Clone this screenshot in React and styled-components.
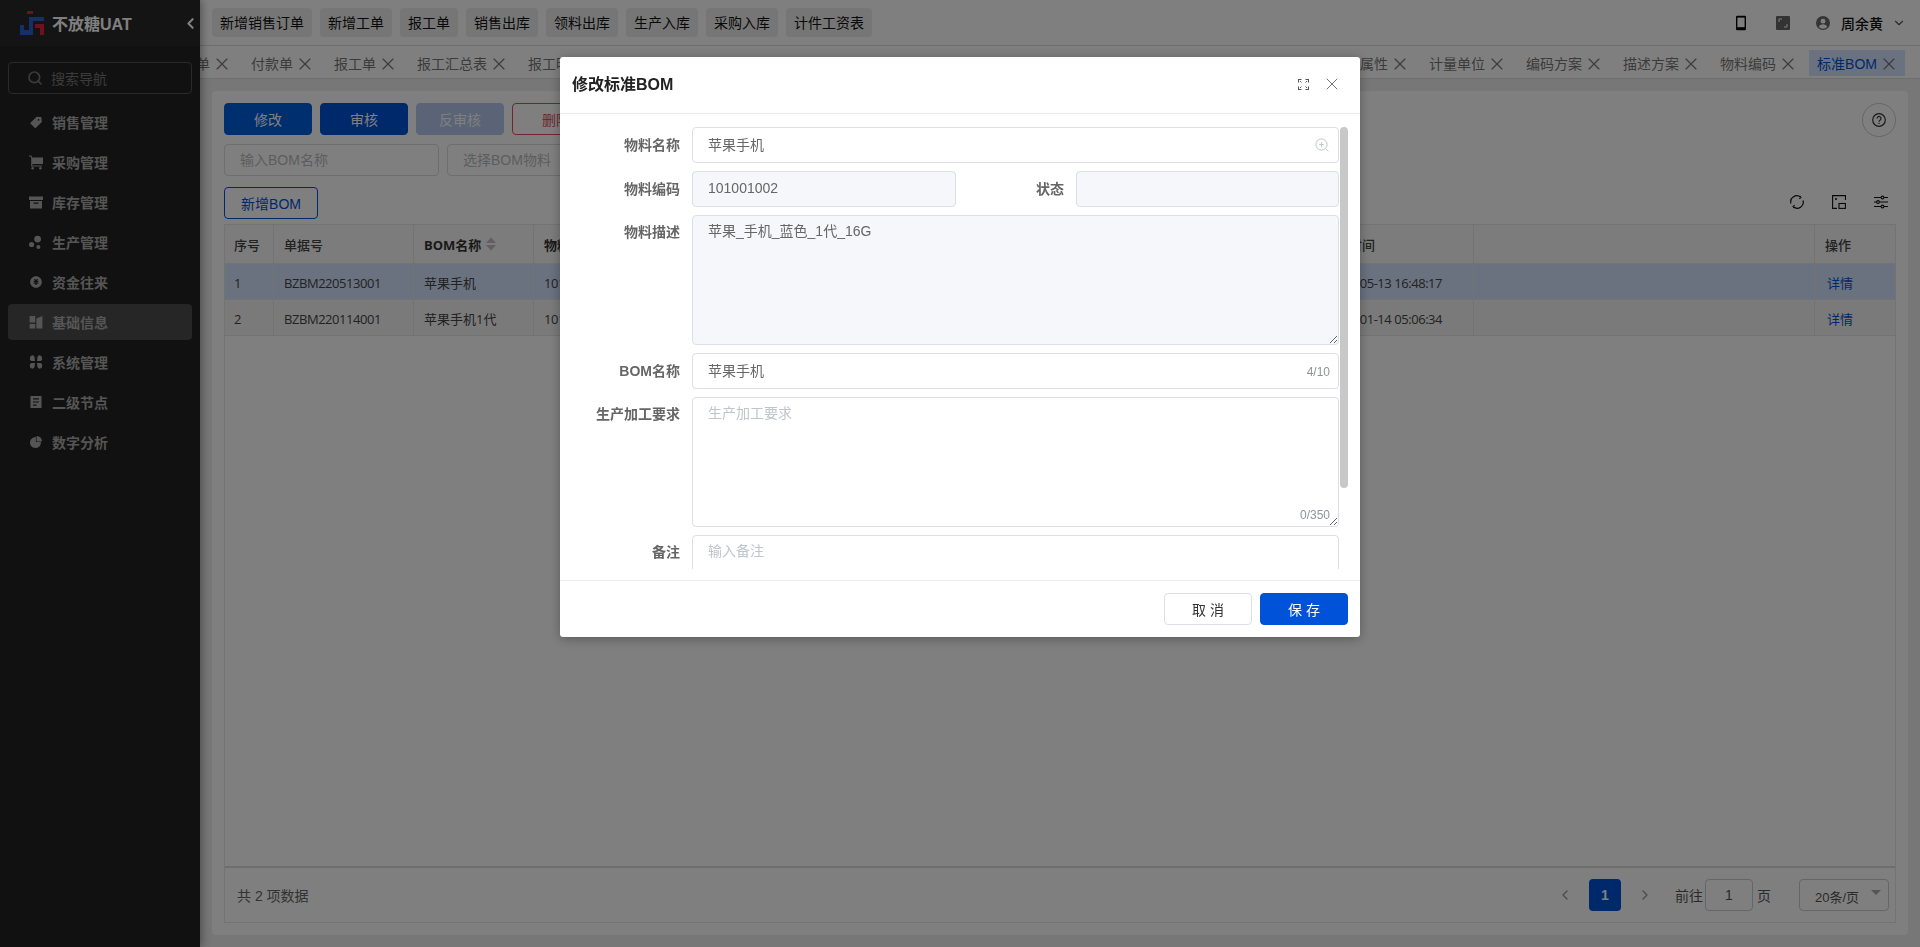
import styled, { createGlobalStyle } from "styled-components";
import { AiFillTag, AiFillPieChart } from "react-icons/ai";
import { FiChevronLeft, FiChevronRight, FiChevronDown, FiSearch, FiX } from "react-icons/fi";
import { RiMoneyCnyCircleFill } from "react-icons/ri";

const FONT = `"Liberation Sans", "Noto Sans CJK SC", sans-serif`;
const TABLE_FONT = `"Open Sans", "Noto Sans CJK SC", sans-serif`;

const GlobalStyle = createGlobalStyle`
  html, body {
    margin: 0;
    height: 100%;
    overflow: hidden;
    font-family: ${FONT};
  }
`;

const Logo = () => (
  <svg width="24" height="24" viewBox="0 0 24 24">
    <path fill="#e0203a" d="M7 0h6v3H7z" />
    <path fill="#2a5ed0" d="M0 14h4v5h5V6h15v4H13v14H0z" />
    <path fill="#e0203a" d="M15 13h9v11h-4v-7h-5z" />
  </svg>
);

const CartIcon = () => (
  <svg width="15" height="15" viewBox="0 0 14 14" fill="currentColor">
    <path d="M0 0h2.6l.5 2H14v6.6H3.3V10H13v1H2.2V2.600L1.700 1H0z" />
    <circle cx="3.600" cy="12.800" r="1.200" />
    <circle cx="11.400" cy="12.800" r="1.200" />
  </svg>
);

const BoxIcon = () => (
  <svg width="15" height="15" viewBox="0 0 14 14" fill="currentColor">
    <path d="M0 1h14v3.400H0zM1 5.400h12V13H1zM4.600 7v1.200h4.800V7z" fillRule="evenodd" />
  </svg>
);

const DotsIcon = () => (
  <svg width="15" height="15" viewBox="0 0 14 14" fill="currentColor">
    <circle cx="8.600" cy="3.600" r="3.400" />
    <circle cx="2.600" cy="9" r="2.600" />
    <circle cx="9.400" cy="11.600" r="2" />
  </svg>
);

const LayoutIcon = () => (
  <svg width="14" height="14" viewBox="0 0 14 14" fill="currentColor">
    <path d="M.6 1h5.600v6.500H.6zM.6 9h5.600v4.400H.6zM7.400 3.600L13.400 1v12.400h-6z" />
  </svg>
);

const AppsIcon = () => (
  <svg width="14" height="14" viewBox="0 0 14 14" fill="currentColor">
    <path d="M1 3a2.200 2.200 0 0 1 4.600-.6L6 6H2.800A2.200 2.200 0 0 1 1 3zM13 3a2.200 2.200 0 0 0-4.600-.6L8 6h3.200A2.200 2.200 0 0 0 13 3zM1 11a2.200 2.200 0 0 0 4.600.6L6 8H2.800A2.200 2.200 0 0 0 1 11zM13 11a2.200 2.200 0 0 1-4.600.6L8 8h3.200A2.200 2.200 0 0 1 13 11z" />
  </svg>
);

const DocIcon = () => (
  <svg width="14" height="14" viewBox="0 0 14 14" fill="currentColor">
    <path
      fillRule="evenodd"
      d="M1.500 1h11v12h-11zM4 3.200v1.200h6V3.200zM4 6.400v1.200h6V6.400zM4 9.600v1.200h3.600V9.600z"
    />
  </svg>
);

const PhoneIcon = () => (
  <svg width="12" height="16" viewBox="0 0 12 16">
    <rect x="1" y="0.800" width="10" height="14.400" rx="1.200" fill="#000" />
    <rect x="2.400" y="2.600" width="7.200" height="9.600" fill="#fff" />
  </svg>
);

const ScreenIcon = () => (
  <svg width="14" height="14" viewBox="0 0 14 14">
    <rect width="14" height="14" rx="1" fill="#666" />
    <path d="M3 6V3h3M11 8v3H8" fill="none" stroke="#fff" strokeWidth="1" />
  </svg>
);

const UserIcon = () => (
  <svg width="14" height="14" viewBox="0 0 14 14">
    <circle cx="7" cy="7" r="7" fill="#6a6a6a" />
    <circle cx="7" cy="5.200" r="2.400" fill="#fff" />
    <path d="M2.800 11c.6-2 2.400-2.800 4.200-2.800s3.600.8 4.200 2.800a6 6 0 0 1-8.400 0z" fill="#fff" />
  </svg>
);

const RefreshIcon = () => (
  <svg width="14" height="14" viewBox="0 0 14 14" fill="none" stroke="#111" strokeWidth="1.200">
    <path d="M1 8.500A6 6 0 0 1 10.600 2.200" />
    <path d="M13 5.500A6 6 0 0 1 3.400 11.800" />
    <path d="M10 .8l1.200 1.900-2 1" strokeWidth="1" />
    <path d="M4 13.200l-1.200-1.900 2-1" strokeWidth="1" />
  </svg>
);

const DensityIcon = () => (
  <svg width="14" height="14" viewBox="0 0 14 14" fill="none" stroke="#111" strokeWidth="1.100">
    <path d="M13.500 5V.6H.6v12.800H5" />
    <rect x="7" y="8.500" width="6.400" height="4.900" />
    <circle cx="4" cy="4" r="1" fill="#111" stroke="none" />
  </svg>
);

const SlidersIcon = () => (
  <svg width="14" height="14" viewBox="0 0 14 14" fill="none" stroke="#111" strokeWidth="1.100">
    <path d="M0 2.500h7M10 2.500h4M0 7h2.500M5.500 7H14M0 11.500h7M10 11.500h4" />
    <circle cx="8.500" cy="2.500" r="1.400" />
    <circle cx="4" cy="7" r="1.400" />
    <circle cx="8.500" cy="11.500" r="1.400" />
  </svg>
);

const ExpandIcon = () => (
  <svg width="11" height="11" viewBox="0 0 11 11" fill="none" stroke="#555" strokeWidth="1.100">
    <path d="M.5 3.500v-3h3M7.500.5h3v3M.5 7.500v3h3M7.500 10.500h3v-3" />
    <path d="M2 2l1.500 1.500M9 2L7.500 3.500M2 9l1.500-1.500M9 9L7.500 7.500" strokeWidth="0.900" />
  </svg>
);

const ZoomPlusIcon = () => (
  <svg width="14" height="14" viewBox="0 0 14 14" fill="none" stroke="#c0c4cc" strokeWidth="1">
    <circle cx="6.500" cy="6.500" r="5.600" />
    <path d="M4.300 6.500h4.400M6.500 4.300v4.400M10.600 10.600l2.700 2.700" />
  </svg>
);

const SortIcon = () => (
  <svg width="10" height="14" viewBox="0 0 10 14" fill="#c0c0c0">
    <path d="M5 .5L10 6H0zM5 13.500L0 8h10z" />
  </svg>
);

const HelpIcon = () => (
  <svg width="14" height="14" viewBox="0 0 14 14" fill="none" stroke="#333" strokeWidth="1.200">
    <circle cx="7" cy="7" r="6.300" />
    <path d="M5 5.400a2 2 0 1 1 3 1.800c-.7.400-1 .8-1 1.500" />
    <path d="M7 9.800v1.200" />
  </svg>
);

const shortcuts = ["新增销售订单", "新增工单", "报工单", "销售出库", "领料出库", "生产入库", "采购入库", "计件工资表"];

const menu = [
  { label: "销售管理", icon: <AiFillTag size={17} /> },
  { label: "采购管理", icon: <CartIcon /> },
  { label: "库存管理", icon: <BoxIcon /> },
  { label: "生产管理", icon: <DotsIcon /> },
  { label: "资金往来", icon: <RiMoneyCnyCircleFill size={18} /> },
  { label: "基础信息", icon: <LayoutIcon />, active: true },
  { label: "系统管理", icon: <AppsIcon /> },
  { label: "二级节点", icon: <DocIcon /> },
  { label: "数字分析", icon: <AiFillPieChart size={18} /> },
];

const tabs = [
  "收款单", "付款单", "报工单", "报工汇总表", "报工明细", "生产订单", "生产领料", "销售订单",
  "采购订单", "委外订单", "供应商管理", "客户信息表", "物料属性", "计量单位", "编码方案",
  "描述方案", "物料编码", "标准BOM",
];

const rows = [
  { no: 1, code: "BZBM220513001", name: "苹果手机", item: "101001002", title: "苹果手机", status: "已审核", time: "2022-05-13 16:48:17", selected: true },
  { no: 2, code: "BZBM220114001", name: "苹果手机1代", item: "101001001", title: "苹果手机", status: "已审核", time: "2022-01-14 05:06:34" },
];

const App = () => {
  return (
    <Page>
      <GlobalStyle />
      <Sidebar>
        <Brand>
          <Logo />
          <BrandName>不放糖UAT</BrandName>
          <Collapse>
            <FiChevronLeft size={17} strokeWidth={3} />
          </Collapse>
        </Brand>
        <NavSearch>
          <FiSearch size={16} strokeWidth={2.5} />
          <span>搜索导航</span>
        </NavSearch>
        <Menu>
          {menu.map((m) => (
            <MenuItem key={m.label} $active={m.active}>
              <MenuIcon>{m.icon}</MenuIcon>
              {m.label}
            </MenuItem>
          ))}
        </Menu>
      </Sidebar>

      <Main>
        <TopBar>
          {shortcuts.map((s) => (
            <Shortcut key={s}>{s}</Shortcut>
          ))}
          <TopRight>
            <TopIcon><PhoneIcon /></TopIcon>
            <TopIcon><ScreenIcon /></TopIcon>
            <UserBox>
              <UserIcon />
              <UserName>周余黄</UserName>
              <FiChevronDown size={14} color="#555" />
            </UserBox>
          </TopRight>
        </TopBar>

        <TabBar>
          {tabs.map((t, i) => (
            <Tab key={t} $active={i === tabs.length - 1}>
              {t}
              <FiX size={20} strokeWidth={1.4} />
            </Tab>
          ))}
        </TabBar>

        <Content>
          <Card>
            <ActionRow>
              <ActionBtn $kind="primary">修改</ActionBtn>
              <ActionBtn $kind="dark">审核</ActionBtn>
              <ActionBtn $kind="disabled">反审核</ActionBtn>
              <ActionBtn $kind="danger">删除</ActionBtn>
              <HelpBtn><HelpIcon /></HelpBtn>
            </ActionRow>
            <FilterRow>
              <FilterInput placeholder="输入BOM名称" />
              <FilterInput placeholder="选择BOM物料" />
            </FilterRow>
            <ToolRow>
              <AddBtn>新增BOM</AddBtn>
              <ToolIcons>
                <RefreshIcon />
                <DensityIcon />
                <SlidersIcon />
              </ToolIcons>
            </ToolRow>
            <TableBox>
              <TableScroll>
                <Table>
                  <colgroup>
                    <col width="49" />
                    <col width="140" />
                    <col width="120" />
                    <col width="227" />
                    <col width="240" />
                    <col width="317" />
                    <col width="156" />
                    <col width="341" />
                    <col />
                  </colgroup>
                  <thead>
                    <tr>
                      <Th>序号</Th>
                      <Th>单据号</Th>
                      <Th $strong>
                        <SortLabel>BOM名称 <SortIcon /></SortLabel>
                      </Th>
                      <Th $strong>物料编码</Th>
                      <Th>物料名称</Th>
                      <Th>状态</Th>
                      <Th $indent={-5}>创建时间</Th>
                      <Th />
                      <Th>操作</Th>
                    </tr>
                  </thead>
                  <tbody>
                    {rows.map((r) => (
                      <Row key={r.no} $selected={r.selected}>
                        <Td>{r.no}</Td>
                        <Td $tight>{r.code}</Td>
                        <Td>{r.name}</Td>
                        <Td $tight>{r.item}</Td>
                        <Td>{r.title}</Td>
                        <Td>{r.status}</Td>
                        <Td $tight>{r.time}</Td>
                        <Td />
                        <Td><DetailLink>详情</DetailLink></Td>
                      </Row>
                    ))}
                  </tbody>
                </Table>
              </TableScroll>
              <TableFooter>
                <span>共 2 项数据</span>
                <Pager>
                  <PagerArrow><FiChevronLeft size={16} /></PagerArrow>
                  <PageCurrent>1</PageCurrent>
                  <PagerArrow><FiChevronRight size={16} /></PagerArrow>
                  <JumpBox>
                    前往
                    <JumpInput>1</JumpInput>
                    页
                  </JumpBox>
                  <SizeSelect>
                    20条/页
                    <SizeCaret />
                  </SizeSelect>
                </Pager>
              </TableFooter>
            </TableBox>
          </Card>
        </Content>
      </Main>

      <Mask>
        <Modal>
          <ModalHead>
            <ModalTitle>修改标准BOM</ModalTitle>
            <ModalTools>
              <ExpandIcon />
              <FiX size={20} color="#666" strokeWidth={1.1} />
            </ModalTools>
          </ModalHead>
          <ModalBody>
            <FormScroll>
              <FormRow>
                <FieldLabel>物料名称</FieldLabel>
                <FieldWrap>
                  <FieldInput defaultValue="苹果手机" readOnly />
                  <FieldSuffix $icon><ZoomPlusIcon /></FieldSuffix>
                </FieldWrap>
              </FormRow>
              <FormRow>
                <FieldLabel>物料编码</FieldLabel>
                <FieldWrap $half>
                  <FieldInput $disabled defaultValue="101001002" readOnly />
                </FieldWrap>
                <SideLabel>状态</SideLabel>
                <FieldWrap>
                  <FieldInput $disabled readOnly />
                </FieldWrap>
              </FormRow>
              <FormRow>
                <FieldLabel $top>物料描述</FieldLabel>
                <FieldWrap>
                  <FieldArea $disabled defaultValue="苹果_手机_蓝色_1代_16G" readOnly />
                </FieldWrap>
              </FormRow>
              <FormRow>
                <FieldLabel>BOM名称</FieldLabel>
                <FieldWrap>
                  <FieldInput defaultValue="苹果手机" readOnly />
                  <FieldSuffix>4/10</FieldSuffix>
                </FieldWrap>
              </FormRow>
              <FormRow>
                <FieldLabel $top>生产加工要求</FieldLabel>
                <FieldWrap>
                  <FieldArea placeholder="生产加工要求" readOnly />
                  <AreaCount>0/350</AreaCount>
                </FieldWrap>
              </FormRow>
              <FormRow>
                <FieldLabel $top>备注</FieldLabel>
                <FieldWrap>
                  <FieldArea placeholder="输入备注" readOnly />
                </FieldWrap>
              </FormRow>
            </FormScroll>
            <ScrollTrack>
              <ScrollThumb />
            </ScrollTrack>
          </ModalBody>
          <ModalFoot>
            <CancelBtn>取 消</CancelBtn>
            <SaveBtn>保 存</SaveBtn>
          </ModalFoot>
        </Modal>
      </Mask>
    </Page>
  );
};

export default App;

const Page = styled.div`
  display: flex;
  height: 947px;
  overflow: hidden;
  font-size: 14px;
`;

const Sidebar = styled.aside`
  width: 200px;
  flex-shrink: 0;
  background: #222;
  box-shadow: 2px 0 8px rgba(0, 0, 0, 0.35);
  z-index: 2;
  display: flex;
  flex-direction: column;
`;
const Brand = styled.div`
  height: 46px;
  background: #282828;
  display: flex;
  align-items: center;
  padding: 0 0 0 20px;
  position: relative;
`;
const BrandName = styled.div`
  margin-left: 8px;
  font-size: 16px;
  font-weight: 700;
  color: #fff;
`;
const Collapse = styled.span`
  position: absolute;
  right: 1px;
  top: 15px;
  color: #fff;
  display: flex;
`;
const NavSearch = styled.div`
  margin: 16px 8px 0;
  height: 32px;
  box-sizing: border-box;
  border: 1px solid #555;
  border-radius: 4px;
  display: flex;
  align-items: center;
  gap: 8px;
  padding-left: 18px;
  color: #777;
`;
const Menu = styled.nav`
  margin-top: 10px;
  padding: 0 8px;
  display: flex;
  flex-direction: column;
  gap: 4px;
`;
const MenuItem = styled.div`
  height: 36px;
  border-radius: 4px;
  display: flex;
  align-items: center;
  padding-left: 21px;
  color: #aaa;
  font-weight: 700;
  background: ${(p) => (p.$active ? "#4c4c4c" : "transparent")};
`;
const MenuIcon = styled.span`
  width: 14px;
  height: 14px;
  margin-right: 9px;
  display: flex;
  align-items: center;
  justify-content: center;
`;

const Main = styled.div`
  flex: 1;
  min-width: 0;
  display: flex;
  flex-direction: column;
  background: #eee;
`;
const TopBar = styled.header`
  height: 45px;
  flex-shrink: 0;
  background: #fff;
  border-bottom: 1px solid #ddd;
  display: flex;
  align-items: center;
  gap: 8px;
  padding: 0 0 0 12px;
`;
const Shortcut = styled.div`
  height: 29px;
  padding: 0 8px;
  margin-top: -1px;
  background: #ededed;
  border-radius: 4px;
  color: #111;
  display: flex;
  align-items: center;
`;
const TopRight = styled.div`
  margin-left: auto;
  display: flex;
  align-items: center;
  padding-right: 14px;
`;
const TopIcon = styled.span`
  width: 42px;
  display: flex;
  justify-content: center;
`;
const UserBox = styled.div`
  display: flex;
  align-items: center;
  margin-left: 12px;
`;
const UserName = styled.span`
  margin: 0 9px 0 11px;
  color: #111;
  font-weight: 500;
`;

const TabBar = styled.div`
  height: 33px;
  flex-shrink: 0;
  box-sizing: border-box;
  padding: 1px 15px 0 0;
  background: #fff;
  border-bottom: 1px solid #ddd;
  display: flex;
  align-items: center;
  justify-content: flex-end;
  gap: 5px;
  overflow: hidden;
`;
const Tab = styled.div`
  height: 26px;
  flex-shrink: 0;
  display: flex;
  align-items: center;
  gap: 5px;
  padding: 0 9px 0 8px;
  white-space: nowrap;
  color: ${(p) => (p.$active ? "#0052d9" : "#777")};
  background: ${(p) => (p.$active ? "#d4e4ff" : "transparent")};
  svg {
    color: #777;
    margin: 2px -3px 0;
  }
`;

const Content = styled.main`
  flex: 1;
  min-height: 0;
  padding: 12px;
  display: flex;
`;
const Card = styled.section`
  flex: 1;
  min-width: 0;
  background: #fff;
  border-radius: 4px;
  padding: 12px;
  display: flex;
  flex-direction: column;
`;
const ActionRow = styled.div`
  display: flex;
  gap: 8px;
  align-items: flex-start;
  height: 34px;
`;
const actionColors = {
  primary: "background:#005ee0;color:#fff;border-color:#005ee0;",
  dark: "background:#0052d9;color:#fff;border-color:#0052d9;",
  disabled: "background:#b5c8ec;color:#fff;border-color:#b5c8ec;",
  danger: "background:#fff;color:#e34d59;border-color:#e34d59;",
};
const ActionBtn = styled.button`
  width: 88px;
  height: 32px;
  border: 1px solid;
  border-radius: 4px;
  font-size: 14px;
  font-family: inherit;
  ${(p) => actionColors[p.$kind]}
`;
const HelpBtn = styled.span`
  margin-left: auto;
  width: 34px;
  height: 34px;
  box-sizing: border-box;
  border: 1px solid #ccc;
  border-radius: 50%;
  display: flex;
  align-items: center;
  justify-content: center;
`;
const FilterRow = styled.div`
  margin-top: 7px;
  display: flex;
  gap: 8px;
`;
const FilterInput = styled.input`
  width: 215px;
  height: 32px;
  box-sizing: border-box;
  border: 1px solid #dcdcdc;
  border-radius: 4px;
  padding: 0 15px;
  font-size: 14px;
  font-family: inherit;
  background: transparent;
  &::placeholder {
    color: #bbb;
  }
`;
const ToolRow = styled.div`
  margin-top: 11px;
  display: flex;
  align-items: center;
  justify-content: space-between;
`;
const AddBtn = styled.button`
  width: 94px;
  height: 32px;
  background: #fff;
  border: 1px solid #0052d9;
  border-radius: 4px;
  color: #0052d9;
  font-size: 14px;
  font-family: inherit;
  padding: 0;
`;
const ToolIcons = styled.div`
  display: flex;
  gap: 28px;
  padding: 0 8px 2px 0;
`;
const TableBox = styled.div`
  margin-top: 5px;
  flex: 1;
  min-height: 0;
  border: 1px solid #e7e7e7;
  display: flex;
  flex-direction: column;
`;
const TableScroll = styled.div`
  flex: 1;
  min-height: 0;
  border-bottom: 2px solid #ddd;
`;
const Table = styled.table`
  width: 100%;
  table-layout: fixed;
  border-collapse: separate;
  border-spacing: 0;
  font-family: ${TABLE_FONT};
  font-size: 13px;
`;
const Th = styled.th`
  height: 38px;
  padding: 0 0 0 ${(p) => 10 + (p.$indent || 0)}px;
  text-align: left;
  white-space: nowrap;
  overflow: hidden;
  color: ${(p) => (p.$strong ? "#333" : "#444")};
  font-weight: ${(p) => (p.$strong ? 700 : 500)};
  background: #f8f8f8;
  border-right: 1px solid #e7e7e7;
  border-bottom: 1px solid #e7e7e7;
  &:first-child {
    padding-left: 9px;
  }
  &:last-child {
    border-right: 0;
  }
`;
const SortLabel = styled.span`
  display: inline-flex;
  align-items: center;
  gap: 5px;
`;
const Row = styled.tr`
  background: ${(p) => (p.$selected ? "#d4e4ff" : "#f5f5f5")};
`;
const Td = styled.td`
  height: 33px;
  padding: 2px 0 0 10px;
  white-space: nowrap;
  overflow: hidden;
  color: #444;
  letter-spacing: ${(p) => (p.$tight ? "-0.45px" : "0")};
  border-right: 1px solid #e7e7e7;
  border-bottom: 1px solid #e7e7e7;
  &:first-child {
    padding-left: 9px;
  }
  &:last-child {
    border-right: 0;
  }
`;
const DetailLink = styled.a`
  color: #0052d9;
  margin-left: 2px;
`;
const TableFooter = styled.div`
  height: 54px;
  flex-shrink: 0;
  display: flex;
  align-items: center;
  justify-content: space-between;
  padding: 0 6px 0 12px;
  color: #666;
  font-size: 14px;
`;
const Pager = styled.div`
  display: flex;
  align-items: center;
`;
const PagerArrow = styled.span`
  width: 16px;
  margin: 0 16px;
  display: flex;
  justify-content: center;
  color: #999;
`;
const PageCurrent = styled.span`
  width: 32px;
  height: 32px;
  background: #0052d9;
  border-radius: 4px;
  color: #fff;
  font-weight: 700;
  display: flex;
  align-items: center;
  justify-content: center;
`;
const JumpBox = styled.div`
  display: flex;
  align-items: center;
  margin-left: 6px;
  color: #555;
`;
const JumpInput = styled.span`
  width: 48px;
  height: 32px;
  margin: 0 4px 0 2px;
  box-sizing: border-box;
  border: 1px solid #ccc;
  border-radius: 4px;
  display: flex;
  align-items: center;
  justify-content: center;
`;
const SizeSelect = styled.div`
  margin-left: 28px;
  width: 90px;
  height: 32px;
  box-sizing: border-box;
  border: 1px solid #ccc;
  border-radius: 4px;
  padding: 2px 0 0 15px;
  display: flex;
  align-items: center;
  color: #555;
  font-size: 13px;
  position: relative;
`;
const SizeCaret = styled.i`
  position: absolute;
  right: 7px;
  top: 10px;
  border: 5px solid transparent;
  border-top: 5px solid #aaa;
  border-bottom: 0;
`;

const Mask = styled.div`
  position: fixed;
  inset: 0;
  z-index: 10;
  background: rgba(0, 0, 0, 0.5);
  display: flex;
  justify-content: center;
  align-items: flex-start;
`;
const Modal = styled.div`
  margin-top: 57px;
  width: 800px;
  height: 580px;
  background: #fff;
  border-radius: 3px;
  box-shadow: 0 2px 12px rgba(0, 0, 0, 0.3);
  display: flex;
  flex-direction: column;
`;
const ModalHead = styled.div`
  height: 57px;
  flex-shrink: 0;
  box-sizing: border-box;
  border-bottom: 1px solid #ebebeb;
  display: flex;
  align-items: center;
  justify-content: space-between;
  padding: 0 18px 2px 12px;
`;
const ModalTitle = styled.div`
  font-size: 16px;
  font-weight: 700;
  color: #222;
  margin-bottom: 2px;
`;
const ModalTools = styled.div`
  display: flex;
  align-items: center;
  gap: 13px;
`;
const ModalBody = styled.div`
  flex: 1;
  min-height: 0;
  display: flex;
  padding: 13px 12px 11px 0;
  overflow: hidden;
`;
const FormScroll = styled.div`
  flex: 1;
  min-width: 0;
  display: flex;
  flex-direction: column;
  gap: 8px;
  overflow: hidden;
`;
const FormRow = styled.div`
  display: flex;
  flex-shrink: 0;
`;
const FieldLabel = styled.label`
  width: 132px;
  flex-shrink: 0;
  box-sizing: border-box;
  padding-right: 12px;
  padding-top: ${(p) => (p.$top ? "7px" : "0")};
  line-height: ${(p) => (p.$top ? "21px" : "36px")};
  text-align: right;
  font-weight: 700;
  color: #666;
`;
const SideLabel = styled(FieldLabel)`
  width: 120px;
`;
const FieldWrap = styled.div`
  position: relative;
  flex: ${(p) => (p.$half ? "0 0 264px" : "1")};
  min-width: 0;
  display: flex;
`;
const fieldBase = `
  width: 100%;
  box-sizing: border-box;
  border: 1px solid #dcdfe6;
  border-radius: 4px;
  padding: 0 15px;
  font-size: 14px;
  font-family: ${FONT};
  color: #666;
  outline: none;
  &::placeholder { color: #c0c4cc; }
`;
const FieldInput = styled.input`
  ${fieldBase}
  height: 36px;
  padding-bottom: 2px;
  background: ${(p) => (p.$disabled ? "#f5f7fa" : "#fff")};
`;
const FieldArea = styled.textarea`
  ${fieldBase}
  height: 130px;
  display: block;
  padding: 5px 15px;
  line-height: 21px;
  background: ${(p) => (p.$disabled ? "#f5f7fa" : "#fff")};
`;
const FieldSuffix = styled.span`
  position: absolute;
  right: ${(p) => (p.$icon ? "10px" : "9px")};
  top: ${(p) => (p.$icon ? "11px" : "12px")};
  font-size: 12px;
  color: #909399;
  display: flex;
`;
const AreaCount = styled.span`
  position: absolute;
  right: 9px;
  bottom: 5px;
  font-size: 12px;
  color: #909399;
`;
const ScrollTrack = styled.div`
  width: 8px;
  flex-shrink: 0;
  margin-left: 1px;
`;
const ScrollThumb = styled.div`
  height: 361px;
  background: #c8c8c8;
  border-radius: 4px;
`;
const ModalFoot = styled.div`
  height: 57px;
  flex-shrink: 0;
  box-sizing: border-box;
  border-top: 1px solid #ebebeb;
  display: flex;
  justify-content: flex-end;
  align-items: center;
  gap: 8px;
  padding: 0 12px 0 0;
`;
const CancelBtn = styled.button`
  width: 88px;
  height: 32px;
  background: #fff;
  border: 1px solid #dcdfe6;
  border-radius: 4px;
  color: #333;
  font-size: 14px;
  font-family: inherit;
`;
const SaveBtn = styled(CancelBtn)`
  background: #0052d9;
  border-color: #0052d9;
  color: #fff;
`;
